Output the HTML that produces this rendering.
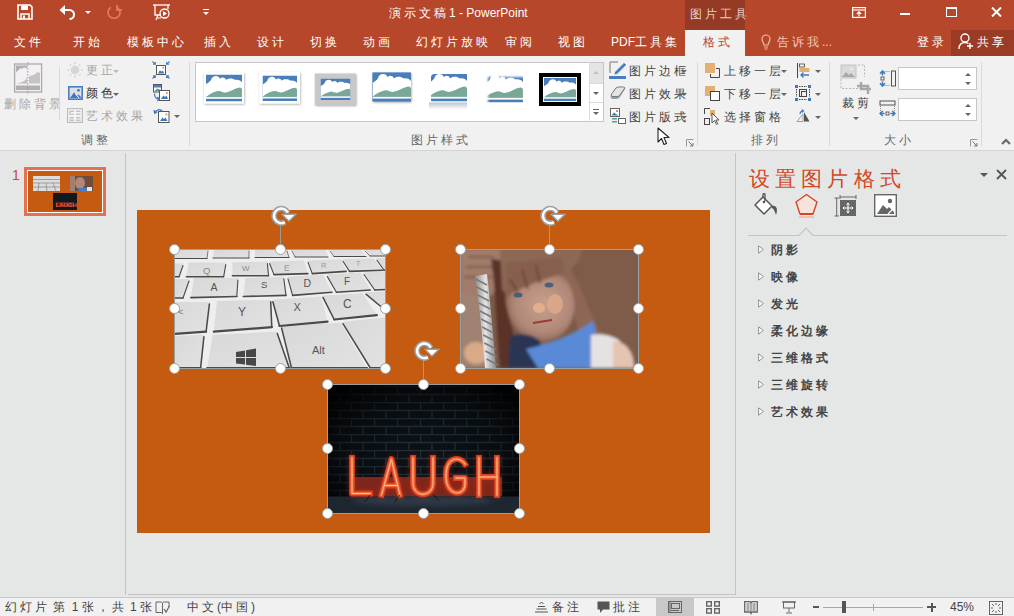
<!DOCTYPE html>
<html><head><meta charset="utf-8">
<style>
*{margin:0;padding:0;box-sizing:border-box}
html,body{width:1014px;height:616px;overflow:hidden;background:#E5E6E6;font-family:"Liberation Sans",sans-serif}
.a{position:absolute}
.t{position:absolute;white-space:nowrap;line-height:1}
#title{left:0;top:0;width:1014px;height:56px;background:#B7472A}
#ribbon{left:0;top:56px;width:1014px;height:95px;background:#F1F1F1;border-bottom:1px solid #D5D5D5}
.tab{color:#fff;font-size:12px;top:36px}
.rt{font-size:12px;color:#444}
.gl{font-size:12px;color:#666}
.dis{color:#A6A6A6}
.sep{position:absolute;width:1px;background:#DADADA}
.dd{position:absolute;width:0;height:0;border-left:3px solid transparent;border-right:3px solid transparent;border-top:3px solid #666}
.h{position:absolute;width:10px;height:10px;border-radius:50%;background:#fff;border:1.8px solid #9AA0A4}
#status{left:0;top:597px;width:1014px;height:19px;background:#F1F1F1;border-top:1px solid #C8C8C8}
.st{font-size:12px;color:#444;top:601px}
.li{font-size:12px;color:#444;font-weight:bold;left:771px}
.tri{position:absolute;left:758px;width:6px;height:9px}
.c{letter-spacing:0.25em}
</style></head><body>
<!-- title bar + tabs -->
<div id="title" class="a"></div>
<div class="a" style="left:685px;top:0;width:60px;height:30px;background:#953B25"></div>
<div class="t" style="left:690px;top:8px;font-size:12px;color:#E8CFC8"><span class="c">图片工具</span></div>
<div class="t" style="left:389px;top:7px;font-size:12px;color:#fff"><span class="c">演示文稿</span>1 - PowerPoint</div>
<div class="a" style="left:685px;top:30px;width:60px;height:26px;background:#F1F1F1"></div>
<div class="a" style="left:951px;top:30px;width:63px;height:26px;background:#9A3B25"></div>


<svg class="a" style="left:17px;top:4px" width="16" height="16" viewBox="0 0 16 16">
<path d="M1 1 H13 L15 3 V15 H1Z" fill="none" stroke="#fff" stroke-width="1.6"/>
<rect x="4" y="1.5" width="7" height="4.5" fill="#fff"/>
<path d="M4 15 V10 H12 V15" fill="none" stroke="#fff" stroke-width="1.5"/>
<rect x="6" y="11.5" width="2" height="3" fill="#fff"/>
</svg>
<svg class="a" style="left:59px;top:4px" width="18" height="16" viewBox="0 0 18 16">
<path d="M3 6 H10 C14 6 15 9 15 10.5 C15 13 13 15 10.5 15" fill="none" stroke="#fff" stroke-width="2"/>
<path d="M0.5 6 L6 1 V11Z" fill="#fff"/>
</svg>
<div class="dd" style="left:85px;top:11px;border-top-color:#fff"></div>
<svg class="a" style="left:107px;top:5px" width="15" height="14" viewBox="0 0 15 14">
<path d="M10 2.2 A6 6 0 1 1 4 2.2" fill="none" stroke="#E07858" stroke-width="1.8"/>
<path d="M10 0 V5 H15" fill="none" stroke="#E07858" stroke-width="1.8"/>
</svg>
<svg class="a" style="left:153px;top:4px" width="17" height="17" viewBox="0 0 17 17">
<path d="M0 1 H17" stroke="#fff" stroke-width="1.3"/>
<path d="M2 1 V11 H8" stroke="#fff" stroke-width="1.3" fill="none"/>
<path d="M15 1 V5" stroke="#fff" stroke-width="1.3"/>
<circle cx="11.5" cy="9.5" r="4.5" fill="none" stroke="#fff" stroke-width="1.3"/>
<path d="M10 7 L14 9.5 L10 12Z" fill="#fff"/>
<path d="M5 11 L3 16 M8 14 H4" stroke="#fff" stroke-width="1.2"/>
</svg>
<div class="a" style="left:203px;top:9px;width:6px;height:1px;background:#fff"></div>
<div class="dd" style="left:203px;top:12px;border-top-color:#fff"></div>
<svg class="a" style="left:852px;top:7px" width="14" height="11" viewBox="0 0 14 11">
<rect x="0.6" y="0.6" width="12.8" height="9.8" fill="none" stroke="#fff" stroke-width="1.2"/>
<path d="M0.6 3 H13.4" stroke="#fff" stroke-width="1.2"/>
<path d="M7 9.5 V5 M4.8 7 L7 4.8 L9.2 7" stroke="#fff" stroke-width="1.2" fill="none"/>
</svg>
<div class="a" style="left:900px;top:13px;width:10px;height:2px;background:#fff"></div>
<div class="a" style="left:946px;top:7px;width:11px;height:10px;border:1.3px solid #fff;border-top-width:2.5px"></div>
<svg class="a" style="left:991px;top:7px" width="11" height="10" viewBox="0 0 11 10"><path d="M1 0.5 L10 9.5 M10 0.5 L1 9.5" stroke="#fff" stroke-width="2"/></svg>
<svg class="a" style="left:761px;top:34px" width="10" height="16" viewBox="0 0 10 16">
<path d="M3 11 C3 9 1 7.5 1 5 A4 4 0 0 1 9 5 C9 7.5 7 9 7 11Z" fill="none" stroke="#F0B8A8" stroke-width="1.2"/>
<path d="M3 13 H7 M3.5 15 H6.5" stroke="#F0B8A8" stroke-width="1.2"/>
</svg>
<svg class="a" style="left:958px;top:33px" width="16" height="17" viewBox="0 0 16 17">
<circle cx="7" cy="5" r="4" fill="none" stroke="#fff" stroke-width="1.4"/>
<path d="M1 16 C1 11 4 9.5 7 9.5 C8.5 9.5 9.5 9.8 10.5 10.5" fill="none" stroke="#fff" stroke-width="1.4"/>
<path d="M12 10 V16 M9 13 H15" stroke="#fff" stroke-width="1.4"/>
</svg>
<div class="t tab" style="left:14px"><span class="c">文件</span></div>
<div class="t tab" style="left:73px"><span class="c">开始</span></div>
<div class="t tab" style="left:127px"><span class="c">模板中心</span></div>
<div class="t tab" style="left:204px"><span class="c">插入</span></div>
<div class="t tab" style="left:257px"><span class="c">设计</span></div>
<div class="t tab" style="left:310px"><span class="c">切换</span></div>
<div class="t tab" style="left:363px"><span class="c">动画</span></div>
<div class="t tab" style="left:416px"><span class="c">幻灯片放映</span></div>
<div class="t tab" style="left:505px"><span class="c">审阅</span></div>
<div class="t tab" style="left:558px"><span class="c">视图</span></div>
<div class="t tab" style="left:611px">PDF<span class="c">工具集</span></div>
<div class="t tab" style="left:703px;color:#B7472A"><span class="c">格式</span></div>
<div class="t tab" style="left:777px;color:#F0C8BC"><span class="c">告诉我</span>...</div>
<div class="t tab" style="left:917px"><span class="c">登录</span></div>
<div class="t tab" style="left:977px"><span class="c">共享</span></div>

<!-- ribbon -->
<div id="ribbon" class="a"></div>

<!-- ribbon group 1 -->
<svg class="a" style="left:13px;top:62px" width="31" height="32" viewBox="0 0 31 32">
<rect x="1.6" y="2" width="27" height="28" fill="#F4F0F4" stroke="#ABABAB" stroke-width="1.3"/>
<path d="M3 3.5 H14 V6.5 C12.5 5 10 5 9 7 C8 6 6 6.5 5.5 8.5 C4.5 8.5 3.5 9.5 3 11Z" fill="#B0B0B0"/>
<path d="M3 21.5 C6 21 10 20.5 12.5 18 L14 15.5 V21.5 Z" fill="#BDBDBD"/>
<path d="M16 21.5 V14.5 C18 13 20 14 22 12 C24 10 25.5 10 27 11 V21.5 Z" fill="#C4C4C4"/>
<rect x="3" y="23.5" width="24" height="4.5" fill="#B0B0B0"/>
<line x1="14.8" y1="0" x2="14.8" y2="32" stroke="#9A9A9A" stroke-width="1" stroke-dasharray="1.5 1.5"/>
</svg>
<div class="t dis" style="left:4px;top:98px;font-size:12px"><span class="c">删除背景</span></div>
<div class="sep" style="left:59px;top:67px;height:53px"></div>
<svg class="a" style="left:67px;top:62px" width="16" height="16" viewBox="0 0 16 16">
<g fill="#D6D6D6"><circle cx="8" cy="8" r="4.3"/><circle cx="8" cy="1.3" r="1.1"/><circle cx="8" cy="14.7" r="1.1"/><circle cx="1.3" cy="8" r="1.1"/><circle cx="14.7" cy="8" r="1.1"/><circle cx="3.3" cy="3.3" r="1"/><circle cx="12.7" cy="3.3" r="1"/><circle cx="3.3" cy="12.7" r="1"/><circle cx="12.7" cy="12.7" r="1"/></g>
</svg>
<div class="t dis" style="left:86px;top:64px;font-size:12px"><span class="c">更正</span></div>
<div class="dd" style="left:113px;top:70px;border-top-color:#B8B8B8"></div>
<svg class="a" style="left:68px;top:86px" width="15" height="14" viewBox="0 0 15 14">
<rect x="0.8" y="0.8" width="13.4" height="12.4" fill="#DDE0E6" stroke="#4A7EC0" stroke-width="1.6"/>
<path d="M2 12 L6 6.5 L9 9.5 L10.5 8.5 L13 11 V12Z" fill="#3F78C2"/>
<path d="M7.5 8 L11 12" stroke="#fff" stroke-width="1"/>
<circle cx="10.5" cy="4.3" r="1.4" fill="#3F78C2"/>
</svg>
<div class="t rt" style="left:86px;top:87px;font-size:12px;color:#333"><span class="c">颜色</span></div>
<div class="dd" style="left:113px;top:93px"></div>
<svg class="a" style="left:67px;top:108px" width="16" height="15" viewBox="0 0 16 15">
<rect x="0.6" y="0.6" width="14.8" height="13.8" fill="#F4F4F4" stroke="#BDBDBD" stroke-width="1.2"/>
<g fill="#C4C4C4"><path d="M2.5 2.5 H7 V4 H4 V7 H2.5Z"/><path d="M9 2.5 H13.5 V4 H9Z"/><path d="M9 5.5 H13.5 V7 H9Z"/><path d="M4 7 C5 5 7 5 7 7Z"/><rect x="2.5" y="9" width="4.5" height="1.5"/><rect x="9" y="9" width="4.5" height="1.5"/><rect x="2.5" y="11.5" width="4.5" height="1.5"/><rect x="9" y="11.5" width="4.5" height="1.5"/></g>
</svg>
<div class="t dis" style="left:86px;top:110px;font-size:12px"><span class="c">艺术效果</span></div>
<div class="dd" style="left:137px;top:116px;border-top-color:#B8B8B8"></div>
<svg class="a" style="left:152px;top:61px" width="18" height="18" viewBox="0 0 18 18">
<rect x="4.5" y="4.5" width="9" height="9" fill="#fff" stroke="#555" stroke-width="1"/>
<path d="M5.8 12.5 L8 9.3 L9.5 10.8 L10.8 9.5 L12.3 12.5Z" fill="#3C78C0"/><rect x="10.3" y="5.8" width="1.8" height="1.8" fill="#E0916A"/>
<g stroke="#3C78C0" stroke-width="1.1" fill="none"><path d="M0.5 0.5 L3.3 3.3 M1 3.3 H3.3 V1"/><path d="M17.5 0.5 L14.7 3.3 M17 3.3 H14.7 V1"/><path d="M0.5 17.5 L3.3 14.7 M1 14.7 H3.3 V17"/><path d="M17.5 17.5 L14.7 14.7 M17 14.7 H14.7 V17"/></g>
</svg>
<svg class="a" style="left:153px;top:84px" width="17" height="18" viewBox="0 0 17 18">
<rect x="0.5" y="0.5" width="8" height="7.5" fill="#fff" stroke="#555"/><path d="M1 7.5 L4 4.5 L8 6 V7.5Z" fill="#5E9E8E"/><rect x="1" y="1" width="7" height="2.5" fill="#4F7FBF"/>
<rect x="6.5" y="6.5" width="10" height="10" fill="#fff" stroke="#555" stroke-width="1"/>
<path d="M8 15 L10.5 11.5 L12 13 L13.5 11.5 L15 15Z" fill="#3C78C0"/><rect x="13" y="8" width="1.8" height="1.8" fill="#E0916A"/>
<path d="M1.5 9.5 C1.5 13.5 3 15 6 15 M4.3 12.8 L6.3 15 L4.3 17.2" stroke="#3C78C0" stroke-width="1.2" fill="none"/>
</svg>
<svg class="a" style="left:153px;top:107px" width="17" height="16" viewBox="0 0 17 16">
<rect x="5.5" y="4.5" width="10.5" height="11" fill="#fff" stroke="#555" stroke-width="1"/>
<path d="M7 14 L9.5 10.5 L11 12 L12.5 10.5 L14.5 14Z" fill="#3C78C0"/><rect x="12.5" y="6.5" width="1.8" height="1.8" fill="#E0916A"/>
<path d="M1.5 6 C3 2.5 7.5 1.5 9.5 4.5" stroke="#3C78C0" stroke-width="1.3" fill="none"/><path d="M0.3 2.8 L1.3 7.2 L4.8 5.2Z" fill="#3C78C0"/>
</svg>
<div class="dd" style="left:174px;top:115px"></div>
<div class="t gl" style="left:81px;top:134px"><span class="c">调整</span></div>
<div class="sep" style="left:189px;top:62px;height:84px"></div>

<!-- gallery -->
<div class="a" style="left:195px;top:62px;width:409px;height:60px;background:#fff;border:1px solid #C6C6C6"></div>
<div class="a" style="left:589px;top:62px;width:15px;height:60px;border-left:1px solid #DADADA"></div>
<div class="a" style="left:590px;top:63px;width:13px;height:20px;background:#E4E4E4"></div>
<div class="a" style="left:590px;top:83px;width:13px;height:1px;background:#DADADA"></div>
<div class="a" style="left:590px;top:102px;width:13px;height:1px;background:#DADADA"></div>
<div class="dd" style="left:593px;top:71px;border-top:none;border-bottom:3px solid #C0C0C0"></div>
<div class="dd" style="left:593px;top:92px"></div>
<div class="a" style="left:593px;top:109px;width:6px;height:1px;background:#666"></div>
<div class="dd" style="left:593px;top:112px"></div>

<svg width="0" height="0" style="position:absolute">
<defs>
<symbol id="pic" viewBox="0 0 36 27" preserveAspectRatio="none">
<rect width="36" height="27" fill="#4A7EBB"/>
<path d="M0 9.5 C2 8.5 4 7 5 5.5 C6 0.5 13 0 14 4.5 C15.5 2.5 19 2.5 20 5.5 C22 3.5 27 3.5 29 5.5 C32 5 35 6 36 8 V23 H0Z" fill="#fff"/>
<path d="M0 22.5 C4 19 8 17.5 12 16.5 C15 16 17 18.5 20 18 C25 17 30 13 34 13 C35 13 36 14 36 15 V22.7 H0Z" fill="#7AA898"/>
<rect x="0" y="22.7" width="36" height="1.6" fill="#fff"/>
</symbol>
<filter id="sh" x="-20%" y="-20%" width="140%" height="150%"><feDropShadow dx="0.5" dy="1" stdDeviation="0.8" flood-color="#000" flood-opacity="0.35"/></filter>
<filter id="soft" filterUnits="userSpaceOnUse" x="0" y="0" width="46" height="36"><feGaussianBlur stdDeviation="1.2"/></filter>
</defs></svg>
<svg class="a" style="left:202px;top:71px" width="46" height="36" viewBox="0 0 46 36">
<rect x="2" y="1.5" width="40" height="31" fill="#fff" filter="url(#sh)"/>
<use href="#pic" x="4" y="3.5" width="36" height="27"/>
</svg>
<svg class="a" style="left:258px;top:71px" width="46" height="36" viewBox="0 0 46 36">
<rect x="1.5" y="1" width="40.5" height="31.5" fill="#fff" filter="url(#sh)"/>
<use href="#pic" x="4.5" y="4.5" width="34.5" height="25.5"/>
</svg>
<svg class="a" style="left:313px;top:72px" width="48" height="38" viewBox="0 0 48 38">
<rect x="2" y="1.5" width="41" height="31.5" fill="#C8C8C8" filter="url(#sh)"/>
<use href="#pic" x="7.5" y="6.5" width="30" height="21.5"/>
</svg>
<svg class="a" style="left:371px;top:71px" width="46" height="36" viewBox="0 0 46 36">
<rect x="1.5" y="1.5" width="38.5" height="29" fill="#4A7EBB" filter="url(#sh)"/>
<use href="#pic" x="1.5" y="1.5" width="38.5" height="29"/>
</svg>
<svg class="a" style="left:427px;top:71px" width="46" height="42" viewBox="0 0 46 42">
<clipPath id="rc"><rect x="2" y="1.5" width="38" height="29" rx="3.5"/></clipPath>
<use href="#pic" x="2" y="1.5" width="38" height="29" clip-path="url(#rc)"/>
<linearGradient id="refl" x1="0" y1="0" x2="0" y2="1"><stop offset="0" stop-color="#A8B4C4"/><stop offset="1" stop-color="#fff"/></linearGradient><rect x="2" y="31.5" width="38" height="7" fill="url(#refl)" opacity="0.8"/>
</svg>
<svg class="a" style="left:482px;top:71px" width="46" height="36" viewBox="0 0 46 36">
<mask id="sm" maskUnits="userSpaceOnUse" x="0" y="0" width="46" height="36"><rect x="3.5" y="3.5" width="36.5" height="27" fill="#fff" filter="url(#soft)"/></mask><use href="#pic" x="2.5" y="2.5" width="38.5" height="29" mask="url(#sm)"/>
</svg>
<svg class="a" style="left:539px;top:73px" width="42" height="33" viewBox="0 0 42 33">
<rect x="0" y="0" width="42" height="33" fill="#000"/>
<rect x="4" y="4" width="34" height="25" fill="#fff"/>
<rect x="5" y="5" width="32" height="23" fill="#000"/>
<use href="#pic" x="5" y="5" width="32" height="23"/>
</svg>


<div class="t gl" style="left:411px;top:134px"><span class="c">图片样式</span></div>
<!-- picture border/effects/layout -->
<svg class="a" style="left:609px;top:61px" width="18" height="18" viewBox="0 0 18 18">
<path d="M1 1 H9 M1 1 V12" stroke="#777" stroke-width="1" fill="none"/>
<path d="M6 11 L14 3 L16 5 L8 13 L5.5 13.5Z" fill="#4A7EC0"/><path d="M14 3 L15 2 L17 4 L16 5Z" fill="#2D5E9E"/>
<rect x="0" y="15" width="17" height="3" fill="#4A7EC0"/>
</svg>
<div class="t rt" style="left:629px;top:65px"><span class="c">图片边框</span></div>
<div class="dd" style="left:681px;top:70px"></div>
<svg class="a" style="left:610px;top:86px" width="16" height="14" viewBox="0 0 16 14">
<path d="M1 9 L6 2 C7 1 9 1 11 1 H14 C15 1 16 2 15 3 L10 11 C9 12 8 13 6 13 H3 C1 13 0 11 1 9Z" fill="#9C9C9C"/>
<path d="M1.5 8 L6 2 C7 1 8.5 1 10 1 H13.5 C14.5 1 15 1.8 14.3 2.8 L9.5 9.5 C9 10.2 8 10.5 7 10.5 H3 C1.5 10.5 0.8 9.3 1.5 8Z" fill="#E4E4E4" stroke="#7A7A7A" stroke-width="1"/>
</svg>
<div class="t rt" style="left:629px;top:88px"><span class="c">图片效果</span></div>
<div class="dd" style="left:681px;top:93px"></div>
<svg class="a" style="left:610px;top:108px" width="16" height="16" viewBox="0 0 16 16">
<rect x="0.5" y="0.5" width="9" height="8" fill="#fff" stroke="#666"/>
<path d="M1.5 7.5 L4 4.5 L6 6 L8.5 7.5Z" fill="#3C78C0"/><rect x="6" y="2" width="2" height="2" fill="#E0916A"/>
<rect x="2" y="10" width="5" height="1.5" fill="#5E9E8E"/><rect x="2" y="13" width="5" height="1.5" fill="#5E9E8E"/>
<rect x="8.5" y="10.5" width="7" height="5" fill="#fff" stroke="#666"/>
</svg>
<div class="t rt" style="left:629px;top:111px"><span class="c">图片版式</span></div>
<div class="dd" style="left:681px;top:116px"></div>
<svg class="a" style="left:686px;top:139px" width="8" height="8" viewBox="0 0 8 8"><path d="M0.5 7.5 V0.5 H7.5" stroke="#999" fill="none"/><path d="M2.5 2.5 L7 7 M7 4 V7 H4" stroke="#777" fill="none"/></svg>
<div class="sep" style="left:697px;top:62px;height:84px"></div>

<!-- arrange -->
<svg class="a" style="left:705px;top:63px" width="16" height="15" viewBox="0 0 16 15">
<rect x="0" y="0" width="10" height="10" fill="#E3B072"/><path d="M11 5.5 H14.5 V14.5 H5.5 V11" stroke="#444" stroke-width="1" fill="none"/>
</svg>
<div class="t rt" style="left:724px;top:65px"><span class="c">上移一层</span></div>
<div class="dd" style="left:781px;top:70px"></div>
<svg class="a" style="left:705px;top:86px" width="16" height="15" viewBox="0 0 16 15">
<rect x="0" y="0" width="10" height="10" fill="#E3B072"/><rect x="5.5" y="5.5" width="9" height="9" fill="#fff" stroke="#444"/>
</svg>
<div class="t rt" style="left:724px;top:88px"><span class="c">下移一层</span></div>
<div class="dd" style="left:781px;top:93px"></div>
<svg class="a" style="left:704px;top:108px" width="17" height="17" viewBox="0 0 17 17">
<path d="M0.5 6 V0.5 H6" stroke="#444" fill="none"/><rect x="0.5" y="10.5" width="5" height="6" fill="none" stroke="#444"/>
<rect x="6" y="2" width="5" height="6" fill="#E3B072"/>
<path d="M8 5 L8 15 L10.5 12.5 L12.5 16.5 L13.8 15.8 L11.8 12 L15 12Z" fill="#fff" stroke="#444" stroke-width="0.9"/>
</svg>
<div class="t rt" style="left:724px;top:111px"><span class="c">选择窗格</span></div>
<svg class="a" style="left:797px;top:63px" width="13" height="15" viewBox="0 0 13 15">
<line x1="0.5" y1="0" x2="0.5" y2="15" stroke="#444"/><rect x="2.5" y="1" width="5" height="3" fill="none" stroke="#444" stroke-width="0.8"/>
<rect x="2.5" y="5" width="10" height="4" fill="#E3B072"/>
<path d="M12 12 H4 M6.5 9.5 L4 12 L6.5 14.5" stroke="#3C78C0" stroke-width="1.3" fill="none"/>
</svg>
<div class="dd" style="left:815px;top:70px"></div>
<svg class="a" style="left:795px;top:85px" width="16" height="16" viewBox="0 0 16 16">
<g fill="#3C78C0"><rect x="0" y="0" width="3" height="3"/><rect x="13" y="0" width="3" height="3"/><rect x="0" y="13" width="3" height="3"/><rect x="13" y="13" width="3" height="3"/></g>
<path d="M1.5 4 V12 M14.5 4 V12 M4 1.5 H12 M4 14.5 H12" stroke="#444" stroke-dasharray="1.5 1" fill="none"/>
<rect x="4.5" y="4.5" width="7" height="7" fill="none" stroke="#444"/><rect x="6.5" y="6.5" width="5" height="5" fill="none" stroke="#444"/>
</svg>
<div class="dd" style="left:815px;top:93px"></div>
<svg class="a" style="left:796px;top:109px" width="14" height="13" viewBox="0 0 14 13">
<path d="M1 12.5 L7 5 V12.5Z" fill="none" stroke="#A0A0A0"/><path d="M8 3 L13.5 12.5 H8Z" fill="#555"/>
<path d="M4 5 C4 3 5 2 7 2 M5.8 0.5 L7.5 2 L5.8 3.5" stroke="#3C78C0" stroke-width="1.1" fill="none"/>
</svg>
<div class="dd" style="left:815px;top:116px"></div>
<div class="t gl" style="left:751px;top:134px"><span class="c">排列</span></div>
<div class="sep" style="left:829px;top:62px;height:84px"></div>

<!-- size -->
<svg class="a" style="left:840px;top:64px" width="32" height="30" viewBox="0 0 32 30">
<rect x="1" y="1" width="15" height="13" fill="#DADADA" stroke="#C4C4C4"/>
<path d="M2 13 L6 8 L9 11 L11 9 L15 13Z" fill="#A8A8A8"/><circle cx="11.5" cy="5" r="1.3" fill="#ECECEC"/>
<path d="M1 15 V24.5 H22 M18 1 H24.5 V13" stroke="#B8B8B8" stroke-dasharray="2 1.5" fill="none"/>
<path d="M21 18 V25 H31 M17 22 H28 V30" stroke="#A8A8A8" stroke-width="2.4" fill="none"/>
</svg>
<div class="t rt" style="left:842px;top:97px"><span class="c">裁剪</span></div>
<div class="dd" style="left:853px;top:117px"></div>
<svg class="a" style="left:879px;top:70px" width="17" height="17" viewBox="0 0 17 17">
<rect x="12.5" y="1" width="4" height="15" fill="none" stroke="#555"/>
<path d="M3.5 1.5 H11 M3.5 15.5 H11" stroke="#888" stroke-dasharray="1 1" fill="none"/>
<rect x="2" y="7" width="3" height="3" fill="none" stroke="#555" stroke-width="0.9"/>
<path d="M3.5 5.5 V1.5 M1 3.8 L3.5 1 L6 3.8 M3.5 11.5 V15.5 M1 13.2 L3.5 16 L6 13.2" stroke="#3C78C0" stroke-width="1.5" fill="none"/>
</svg>
<div class="a" style="left:898px;top:67px;width:79px;height:23px;background:#fff;border:1px solid #C6C6C6"></div>
<div class="dd" style="left:965px;top:73px;border-top:none;border-bottom:3px solid #666"></div>
<div class="dd" style="left:965px;top:82px"></div>
<svg class="a" style="left:879px;top:100px" width="17" height="17" viewBox="0 0 17 17">
<rect x="1" y="1" width="15" height="4" fill="none" stroke="#555"/>
<path d="M1.5 6 V13.5 M15.5 6 V13.5" stroke="#888" stroke-dasharray="1 1" fill="none"/>
<rect x="7" y="12" width="3" height="3" fill="none" stroke="#555" stroke-width="0.9"/>
<path d="M5.5 13.5 H1.5 M3.8 11 L1 13.5 L3.8 16 M11.5 13.5 H15.5 M13.2 11 L16 13.5 L13.2 16" stroke="#3C78C0" stroke-width="1.5" fill="none"/>
</svg>
<div class="a" style="left:898px;top:98px;width:79px;height:23px;background:#fff;border:1px solid #C6C6C6"></div>
<div class="dd" style="left:965px;top:104px;border-top:none;border-bottom:3px solid #666"></div>
<div class="dd" style="left:965px;top:113px"></div>
<div class="t gl" style="left:884px;top:134px"><span class="c">大小</span></div>
<svg class="a" style="left:970px;top:139px" width="8" height="8" viewBox="0 0 8 8"><path d="M0.5 7.5 V0.5 H7.5" stroke="#999" fill="none"/><path d="M2.5 2.5 L7 7 M7 4 V7 H4" stroke="#777" fill="none"/></svg>
<svg class="a" style="left:688px;top:139px" width="0" height="0"></svg>
<div class="sep" style="left:981px;top:62px;height:84px"></div>
<svg class="a" style="left:1001px;top:138px" width="10" height="7" viewBox="0 0 10 7"><path d="M1 6 L5 2 L9 6" stroke="#6A6A6A" stroke-width="2.2" fill="none"/></svg>

<!-- main -->
<div class="a" style="left:125px;top:153px;width:1px;height:442px;background:#C4C4C4"></div>
<div class="a" style="left:735px;top:153px;width:1px;height:442px;background:#C4C4C4"></div>
<div class="a" style="left:128px;top:594px;width:608px;height:1px;background:#C4C4C4"></div>

<!-- slide -->
<div class="a" style="left:137px;top:210px;width:573px;height:323px;background:#C55A11"></div>

<svg class="a" style="left:175px;top:249px" width="211" height="119" viewBox="0 0 211 119">
<defs><linearGradient id="ktop" x1="0" y1="0" x2="1" y2="1"><stop offset="0" stop-color="#D8D8D8"/><stop offset="1" stop-color="#E2E2E2"/></linearGradient></defs>
<rect width="211" height="119" fill="#EEEEEE"/>
<g fill="url(#ktop)"><path d="M0 0 L33 0 L32 9.5 L0 9.5Z"/><path d="M39 0 L74 0 L74 9 L38 9Z"/><path d="M80 0 L112 0 L114 8.5 L80 8.5Z"/><path d="M117 0 L150 0 L153 8 L120 8Z"/><path d="M155 0 L186 0 L191 7.5 L159 7.5Z"/><path d="M190 0 L211 0 L211 7 L195 7Z"/><path d="M0 14.5 L8 14.5 L4 27.8 L0 27.8Z"/><path d="M13.6 13.6 L50.8 13.6 L48.6 27.8 L11.4 27.8Z"/><path d="M57.4 13.6 L92.4 12.5 L93.5 26.7 L57.4 26.7Z"/><path d="M94.6 12.5 L129 11.4 L132.9 24.6 L99 25.6Z"/><path d="M133 11.4 L166 10.3 L171.2 22.4 L137.3 24.6Z"/><path d="M168 10.3 L198.6 9.2 L207.3 21.3 L174.5 22.4Z"/><path d="M202 9.2 L211 9 L211 21 L209 21.3Z"/><path d="M0 30 L14 30 L8 49 L0 49Z"/><path d="M19 29 L62.9 29 L61.8 47.5 L15.8 48.6Z"/><path d="M70.5 29 L108.8 27.8 L111 46.4 L68.3 47.5Z"/><path d="M113 27.8 L148 25.6 L157 43.2 L117.6 46.4Z"/><path d="M152.4 25.6 L185.5 23.5 L195.3 41 L161.4 43.2Z"/><path d="M189 23.5 L211 22.5 L211 40.5 L199.7 41Z"/><path d="M0 53 L34.4 53 L31.1 82.6 L0 84.8Z"/><path d="M42 51.9 L95.7 50.8 L96.8 78.2 L38.8 82.6Z"/><path d="M97.9 50.8 L146 47.5 L152.6 72.7 L104.5 77Z"/><path d="M148 46.4 L187.6 44.3 L201.9 66.1 L159.2 70.5Z"/><path d="M191 43.2 L211 42.5 L211 60.7 L210 61Z"/><path d="M0 87 L28.9 85.8 L25.6 119 L0 119Z"/><path d="M37.7 85.8 L102.3 82.6 L114.3 119 L32.2 119Z"/><path d="M106.6 77 L165.8 73.8 L192 119 L116.5 119Z"/><path d="M168 72.7 L211 68.3 L211 119 L195.3 119Z"/></g>
<g stroke="#4A4A4A" fill="none" stroke-linecap="round"><path d="M0 9.5 L32 9.5" stroke-width="1.0"/><path d="M33 2 L32 9.5" stroke-width="0.70"/><path d="M38 9 L74 9" stroke-width="1.0"/><path d="M74 2 L74 9" stroke-width="0.70"/><path d="M80 8.5 L114 8.5" stroke-width="1.0"/><path d="M112 2 L114 8.5" stroke-width="0.70"/><path d="M120 8 L153 8" stroke-width="1.0"/><path d="M117 2 L120 8" stroke-width="0.70"/><path d="M159 7.5 L191 7.5" stroke-width="1.0"/><path d="M155 2 L159 7.5" stroke-width="0.70"/><path d="M195 7 L211 7" stroke-width="1.0"/><path d="M190 2 L195 7" stroke-width="0.70"/><path d="M0 27.8 L4 27.8" stroke-width="1.6"/><path d="M8 16.5 L4 27.8" stroke-width="1.12"/><path d="M11.4 27.8 L48.6 27.8" stroke-width="1.6"/><path d="M50.8 15.6 L48.6 27.8" stroke-width="1.12"/><path d="M57.4 26.7 L93.5 26.7" stroke-width="1.6"/><path d="M92.4 14.5 L93.5 26.7" stroke-width="1.12"/><path d="M99 25.6 L132.9 24.6" stroke-width="1.6"/><path d="M94.6 14.5 L99 25.6" stroke-width="1.12"/><path d="M137.3 24.6 L171.2 22.4" stroke-width="1.6"/><path d="M133 13.4 L137.3 24.6" stroke-width="1.12"/><path d="M174.5 22.4 L207.3 21.3" stroke-width="1.6"/><path d="M168 12.3 L174.5 22.4" stroke-width="1.12"/><path d="M209 21.3 L211 21" stroke-width="1.6"/><path d="M202 11.2 L209 21.3" stroke-width="1.12"/><path d="M0 49 L8 49" stroke-width="1.6"/><path d="M14 32 L8 49" stroke-width="1.12"/><path d="M15.8 48.6 L61.8 47.5" stroke-width="1.6"/><path d="M62.9 31 L61.8 47.5" stroke-width="1.12"/><path d="M68.3 47.5 L111 46.4" stroke-width="1.6"/><path d="M108.8 29.8 L111 46.4" stroke-width="1.12"/><path d="M117.6 46.4 L157 43.2" stroke-width="1.6"/><path d="M113 29.8 L117.6 46.4" stroke-width="1.12"/><path d="M161.4 43.2 L195.3 41" stroke-width="1.6"/><path d="M152.4 27.6 L161.4 43.2" stroke-width="1.12"/><path d="M199.7 41 L211 40.5" stroke-width="1.6"/><path d="M189 25.5 L199.7 41" stroke-width="1.12"/><path d="M0 84.8 L31.1 82.6" stroke-width="2.2"/><path d="M34.4 55 L31.1 82.6" stroke-width="1.54"/><path d="M38.8 82.6 L96.8 78.2" stroke-width="2.2"/><path d="M95.7 52.8 L96.8 78.2" stroke-width="1.54"/><path d="M104.5 77 L152.6 72.7" stroke-width="2.2"/><path d="M97.9 52.8 L104.5 77" stroke-width="1.54"/><path d="M159.2 70.5 L201.9 66.1" stroke-width="2.2"/><path d="M148 48.4 L159.2 70.5" stroke-width="1.54"/><path d="M210 61 L211 60.7" stroke-width="2.2"/><path d="M191 45.2 L210 61" stroke-width="1.54"/><path d="M0 119 L25.6 119" stroke-width="2.2"/><path d="M28.9 87.8 L25.6 119" stroke-width="1.54"/><path d="M32.2 119 L114.3 119" stroke-width="2.2"/><path d="M102.3 84.6 L114.3 119" stroke-width="1.54"/><path d="M116.5 119 L192 119" stroke-width="2.2"/><path d="M106.6 79 L116.5 119" stroke-width="1.54"/><path d="M195.3 119 L211 119" stroke-width="2.2"/><path d="M168 74.7 L195.3 119" stroke-width="1.54"/></g>
<g fill="#555" font-family="Liberation Sans">
<text x="28" y="24.6" fill="#8A8A8A" font-size="9.5">Q</text><text x="67" y="21.5" fill="#8A8A8A" font-size="8">W</text><text x="109" y="22.4" fill="#999" font-size="8.5">E</text><text x="146" y="19" fill="#999" font-size="7.5">R</text><text x="181" y="17" fill="#999" font-size="7">T</text>
<text x="35.5" y="42" font-size="10.5">A</text><text x="86" y="38.8" font-size="9.5">S</text><text x="128.5" y="37.7" font-size="10.5">D</text><text x="169" y="35.5" font-size="10">F</text>
<text x="63" y="66.5" font-size="12">Y</text><text x="118.5" y="62" font-size="11">X</text><text x="168" y="58.5" font-size="12">C</text>
<text x="137" y="104.5" font-size="11">Alt</text>
<text x="3" y="66" font-size="9" fill="#777">&lt;</text>
</g>
<g fill="#484848"><path d="M61 103 L70 101.5 V108 H61Z"/><path d="M71 101.3 L81 99.5 V108 H71Z"/><path d="M61 109 H70 V115.5 L61 114.5Z"/><path d="M71 109 H81 V117 L71 115.7Z"/></g>
</svg>

<svg class="a" style="left:460px;top:249px" width="178" height="119" viewBox="0 0 178 119">
<defs>
<radialGradient id="face" cx="0.55" cy="0.45" r="0.6"><stop offset="0" stop-color="#C8A08C"/><stop offset="0.7" stop-color="#B08878"/><stop offset="1" stop-color="#8A6454"/></radialGradient>
<linearGradient id="rope" x1="0" y1="0" x2="1" y2="0"><stop offset="0" stop-color="#8A8A8A"/><stop offset="0.5" stop-color="#E4E4E4"/><stop offset="1" stop-color="#8A8A8A"/></linearGradient>
<filter id="bl2" x="-5%" y="-5%" width="110%" height="110%"><feGaussianBlur stdDeviation="1.5"/></filter>
<filter id="bl1" x="-5%" y="-5%" width="110%" height="110%"><feGaussianBlur stdDeviation="0.7"/></filter>
</defs>
<rect width="178" height="119" fill="#7C5A48"/>
<g filter="url(#bl2)">
<rect x="118" y="0" width="60" height="119" fill="#7E5C4A"/>
<path d="M0 40 H26 C28 60 26 90 28 119 H0Z" fill="#A08272"/>
<ellipse cx="16" cy="104" rx="12" ry="11" fill="#D8AA88"/>
<path d="M0 0 H40 C42 15 40 35 32 46 C22 48 8 47 0 44Z" fill="#A27C6A"/>
<path d="M8 8 H34 M6 18 H34 M4 28 H32" stroke="#7A5848" stroke-width="2"/>
<path d="M31 10 C36 40 36 80 40 119 H66 C58 100 50 75 46 55 C44 40 46 25 48 12Z" fill="#5A3226"/>
<path d="M100 6 C118 25 126 55 140 84 L120 90 C114 62 108 38 96 18Z" fill="#8E6654"/>
<path d="M40 0 H122 C122 10 112 22 100 28 C86 34 66 40 48 48 L42 40Z" fill="#8C6856"/>
<path d="M46 50 C50 36 72 30 92 26 C104 24 112 34 114 52 C116 72 106 90 84 92 C62 92 48 76 46 50Z" fill="url(#face)"/>
<path d="M46 48 C58 40 78 32 104 24 L102 8 L46 14Z" fill="#86604E"/>
<path d="M50 30 L58 44 M62 20 L68 40 M76 16 L80 34" stroke="#6A4434" stroke-width="2"/>
<path d="M64 88 C80 96 100 96 116 86 L118 104 H62Z" fill="#8A6A5A"/>
<path d="M50 88 C58 84 70 84 80 92 L86 119 H48Z" fill="#2C3652"/>
<path d="M66 100 C90 95 115 85 133 72 C138 85 136 105 132 119 H78Z" fill="#5A8AD6"/>
<path d="M131 86 C140 84 152 86 160 92 L160 119 H131Z" fill="#E6E2E2"/>
<path d="M153 92 C165 92 174 102 174 119 H153Z" fill="#E4C4B2"/>
</g>
<g filter="url(#bl1)">
<ellipse cx="79" cy="59" rx="6" ry="5" fill="#E4AE8E"/>
<ellipse cx="95" cy="55" rx="8" ry="10" fill="#E0AA8C" opacity="0.8"/>
<ellipse cx="58" cy="46" rx="4.5" ry="2.5" fill="#4A5E7A"/><ellipse cx="89" cy="36" rx="4.5" ry="2.5" fill="#4A5E7A"/>
<path d="M73 74 C79 73 86 72 92 71" stroke="#9A3A36" stroke-width="1.8" fill="none"/>
</g>
<path d="M15 27 C19 50 22 85 25 119 H36 C33 85 30 50 27 25Z" fill="url(#rope)"/>
<g stroke="#7A7A7A" stroke-width="1.6"><path d="M15.5 30 L27.0 36"/><path d="M16.6 38 L28.1 44"/><path d="M17.7 46 L29.2 52"/><path d="M18.8 54 L30.3 60"/><path d="M19.9 62 L31.4 68"/><path d="M21.0 70 L32.5 76"/><path d="M22.1 78 L33.6 84"/><path d="M23.2 86 L34.7 92"/><path d="M24.3 94 L35.8 100"/><path d="M25.4 102 L36.9 108"/><path d="M26.5 110 L38.0 116"/></g>
</svg>

<svg class="a" style="left:328px;top:384px" width="191" height="129" viewBox="0 0 191 129">
<defs>
<radialGradient id="vig" cx="0.5" cy="0.55" r="0.65"><stop offset="0" stop-color="#000" stop-opacity="0"/><stop offset="0.6" stop-color="#000" stop-opacity="0.3"/><stop offset="1" stop-color="#000" stop-opacity="0.9"/></radialGradient>
<pattern id="brick" x="0" y="2" width="23" height="16" patternUnits="userSpaceOnUse"><rect width="23" height="16" fill="#0E1216"/><path d="M0 0.5 H23 M0 8.5 H23 M0.5 0 V8 M12 8 V16" stroke="#22323E" stroke-width="1.3"/></pattern>
<filter id="glow" x="-20%" y="-40%" width="140%" height="180%"><feGaussianBlur stdDeviation="2.5"/></filter>
</defs>
<rect width="191" height="129" fill="url(#brick)"/>
<rect width="191" height="129" fill="url(#vig)"/>
<rect x="22" y="93" width="152" height="19.5" fill="#7E261A"/>
<rect x="0" y="112.5" width="191" height="16.5" fill="#1E2630"/>
<ellipse cx="95" cy="117" rx="70" ry="5" fill="#3A4654" opacity="0.6" filter="url(#glow)"/>
<g fill="none" stroke-linecap="square" stroke-linejoin="round">
<g stroke="#D03420" stroke-width="7" opacity="0.35" filter="url(#glow)"><path d="M24 74 V109.5 H42"/><path d="M53.5 111 L63.4 75 L72 111 M56.5 101.5 H69.5"/><path d="M85 74 V99 C85 114 105 114 105 99 V74"/><path d="M137 80 C132 72 118 72 118 92 C118 113 137 113 137 100 V94 H128"/><path d="M151 74 V111 M169 74 V111 M151 93 H169"/></g>
<g stroke="#D83C24" stroke-width="5.8"><path d="M24 74 V109.5 H42"/><path d="M53.5 111 L63.4 75 L72 111 M56.5 101.5 H69.5"/><path d="M85 74 V99 C85 114 105 114 105 99 V74"/><path d="M137 80 C132 72 118 72 118 92 C118 113 137 113 137 100 V94 H128"/><path d="M151 74 V111 M169 74 V111 M151 93 H169"/></g>
<g stroke="#F06A38" stroke-width="3.2"><path d="M24 74 V109.5 H42"/><path d="M53.5 111 L63.4 75 L72 111 M56.5 101.5 H69.5"/><path d="M85 74 V99 C85 114 105 114 105 99 V74"/><path d="M137 80 C132 72 118 72 118 92 C118 113 137 113 137 100 V94 H128"/><path d="M151 74 V111 M169 74 V111 M151 93 H169"/></g>
<g stroke="#FFC08A" stroke-width="1"><path d="M24 74 V109.5 H42"/><path d="M53.5 111 L63.4 75 L72 111 M56.5 101.5 H69.5"/><path d="M85 74 V99 C85 114 105 114 105 99 V74"/><path d="M137 80 C132 72 118 72 118 92 C118 113 137 113 137 100 V94 H128"/><path d="M151 74 V111 M169 74 V111 M151 93 H169"/></g>
</g>
<path d="M42 111 L37 118 M72 111 L66 119 M105 110 L111 117" stroke="#111" stroke-width="0.8"/>
</svg>
<div class="a" style="left:174px;top:248.5px;width:212px;height:120px;border:1px solid #9AA0A4"></div>
<div class="a" style="left:279.5px;top:223px;width:1px;height:26px;background:#9A9A9A"></div>
<svg class="a" style="left:269.0px;top:205.0px" width="30" height="24" viewBox="0 0 30 24">
<path d="M18.9 7.7 A7.3 7.3 0 1 0 15.95 17.1" stroke="#9AA0A4" stroke-width="5.6" fill="none"/>
<path d="M18.9 7.7 A7.3 7.3 0 1 0 15.95 17.1" stroke="#fff" stroke-width="2.4" fill="none"/>
<path d="M13 9.3 L27.3 9.1 L19.9 16.2Z" fill="#fff" stroke="#9AA0A4" stroke-width="1.4" stroke-linejoin="round"/>
</svg>
<div class="h" style="left:169.0px;top:243.5px;width:11px;height:11px"></div>
<div class="h" style="left:274.5px;top:243.5px;width:11px;height:11px"></div>
<div class="h" style="left:380.0px;top:362.5px;width:11px;height:11px"></div>
<div class="h" style="left:169.0px;top:303.0px;width:11px;height:11px"></div>
<div class="h" style="left:380.0px;top:303.0px;width:11px;height:11px"></div>
<div class="h" style="left:169.0px;top:362.5px;width:11px;height:11px"></div>
<div class="h" style="left:274.5px;top:362.5px;width:11px;height:11px"></div>
<div class="h" style="left:380.0px;top:243.5px;width:11px;height:11px"></div>
<div class="a" style="left:460px;top:248.5px;width:179px;height:120px;border:1px solid #9AA0A4"></div>
<div class="a" style="left:548.5px;top:223px;width:1px;height:26px;background:#9A9A9A"></div>
<svg class="a" style="left:538.0px;top:205.0px" width="30" height="24" viewBox="0 0 30 24">
<path d="M18.9 7.7 A7.3 7.3 0 1 0 15.95 17.1" stroke="#9AA0A4" stroke-width="5.6" fill="none"/>
<path d="M18.9 7.7 A7.3 7.3 0 1 0 15.95 17.1" stroke="#fff" stroke-width="2.4" fill="none"/>
<path d="M13 9.3 L27.3 9.1 L19.9 16.2Z" fill="#fff" stroke="#9AA0A4" stroke-width="1.4" stroke-linejoin="round"/>
</svg>
<div class="h" style="left:454.5px;top:243.5px;width:11px;height:11px"></div>
<div class="h" style="left:543.5px;top:243.5px;width:11px;height:11px"></div>
<div class="h" style="left:632.5px;top:362.5px;width:11px;height:11px"></div>
<div class="h" style="left:454.5px;top:303.0px;width:11px;height:11px"></div>
<div class="h" style="left:632.5px;top:303.0px;width:11px;height:11px"></div>
<div class="h" style="left:454.5px;top:362.5px;width:11px;height:11px"></div>
<div class="h" style="left:543.5px;top:362.5px;width:11px;height:11px"></div>
<div class="h" style="left:632.5px;top:243.5px;width:11px;height:11px"></div>
<div class="a" style="left:327px;top:383.5px;width:193px;height:130.5px;border:1px solid #9AA0A4"></div>
<div class="a" style="left:422.75px;top:358px;width:1px;height:26px;background:#9A9A9A"></div>
<svg class="a" style="left:412.25px;top:340.0px" width="30" height="24" viewBox="0 0 30 24">
<path d="M18.9 7.7 A7.3 7.3 0 1 0 15.95 17.1" stroke="#9AA0A4" stroke-width="5.6" fill="none"/>
<path d="M18.9 7.7 A7.3 7.3 0 1 0 15.95 17.1" stroke="#fff" stroke-width="2.4" fill="none"/>
<path d="M13 9.3 L27.3 9.1 L19.9 16.2Z" fill="#fff" stroke="#9AA0A4" stroke-width="1.4" stroke-linejoin="round"/>
</svg>
<div class="h" style="left:322.0px;top:378.5px;width:11px;height:11px"></div>
<div class="h" style="left:417.75px;top:378.5px;width:11px;height:11px"></div>
<div class="h" style="left:513.5px;top:508.0px;width:11px;height:11px"></div>
<div class="h" style="left:322.0px;top:443.25px;width:11px;height:11px"></div>
<div class="h" style="left:513.5px;top:443.25px;width:11px;height:11px"></div>
<div class="h" style="left:322.0px;top:508.0px;width:11px;height:11px"></div>
<div class="h" style="left:417.75px;top:508.0px;width:11px;height:11px"></div>
<div class="h" style="left:513.5px;top:378.5px;width:11px;height:11px"></div>


<!-- left thumb -->
<div class="t" style="left:12px;top:167.5px;font-size:14px;color:#D24726">1</div>
<div class="a" style="left:24px;top:167px;width:82px;height:49px;background:#E5714E"></div>
<div class="a" style="left:27px;top:170px;width:76px;height:43px;background:#fff"></div>
<div class="a" style="left:28px;top:171px;width:74px;height:41px;background:#C55A11"></div>
<svg class="a" style="left:33px;top:176px" width="27" height="15" viewBox="0 0 27 15"><rect width="27" height="15" fill="#DCDCDC"/><g stroke="#777" stroke-width="0.6"><path d="M0 3.5 H27 M0 7 H27 M0 11 H27 M6 7 L5 15 M13 7 L14 15 M20 7 L23 15"/></g></svg>
<svg class="a" style="left:70px;top:176px" width="23" height="15" viewBox="0 0 23 15"><rect width="23" height="15" fill="#6E4C3E"/><rect x="0" y="0" width="5" height="15" fill="#A08070"/><ellipse cx="10" cy="7" rx="5" ry="6" fill="#B08878"/><path d="M9 12 H17 V15 H8Z" fill="#4A7AC8"/><path d="M17 11 H22 V15 H17Z" fill="#E8E4E2"/></svg>
<svg class="a" style="left:53px;top:193px" width="24" height="17" viewBox="0 0 24 17"><rect width="24" height="17" fill="#121820"/><path d="M3 9 H21 V14 H3Z" fill="#7A2A22" opacity="0.8"/><text x="2.5" y="14" font-size="6" font-family="Liberation Sans" fill="#F05A40" font-weight="bold">LAUGH</text></svg>

<!-- task pane -->
<div class="t" style="left:749px;top:168.5px;font-size:20.5px;color:#D24726"><span class="c">设置图片格式</span></div>
<div class="dd" style="left:980px;top:173px;border-left-width:4px;border-right-width:4px;border-top-width:4px;border-top-color:#555"></div>
<svg class="a" style="left:996px;top:169px" width="11" height="11" viewBox="0 0 11 11"><path d="M1 1 L10 10 M10 1 L1 10" stroke="#555" stroke-width="1.8"/></svg>
<svg class="a" style="left:753px;top:193px" width="26" height="25" viewBox="0 0 26 25">
<path d="M2 12 L10 4 L19 13 L11 21Z" fill="#fff" stroke="#555" stroke-width="1.5" stroke-linejoin="round"/>
<path d="M10 4 V1.5 C10 0.5 12 0.5 12 1.5 V8" stroke="#555" stroke-width="1.3" fill="none"/>
<circle cx="11" cy="9" r="1.3" fill="#555"/>
<path d="M19 13 C24 12 25 17 23 22 C22 19 21 16 19 15Z" fill="#555"/>
</svg>
<svg class="a" style="left:794px;top:193px" width="25" height="26" viewBox="0 0 25 26">
<path d="M12.5 1.5 L23 9 L19 21 H6 L2 9Z" fill="#F6E4DC" stroke="#D24726" stroke-width="1.4" stroke-linejoin="round"/>
<path d="M6 21 H19" stroke="#D24726" stroke-width="2"/>
<rect x="5" y="23" width="15" height="2" fill="#EFC2B2"/>
</svg>
<svg class="a" style="left:834px;top:194px" width="23" height="23" viewBox="0 0 23 23">
<path d="M0.5 4 H5 M2.7 4 V22 M0.5 22 H5" stroke="#666" stroke-width="1"/>
<path d="M6 1 V5 M22 1 V5 M6 3 H22" stroke="#666" stroke-width="1"/>
<rect x="6" y="6" width="16" height="16" fill="#666"/>
<path d="M14 9 V19 M9 14 H19" stroke="#fff" stroke-width="1.2"/>
<path d="M12.5 10.5 L14 9 L15.5 10.5 M12.5 17.5 L14 19 L15.5 17.5 M10.5 12.5 L9 14 L10.5 15.5 M17.5 12.5 L19 14 L17.5 15.5" stroke="#fff" stroke-width="1" fill="none"/>
</svg>
<svg class="a" style="left:874px;top:194px" width="23" height="23" viewBox="0 0 23 23">
<rect x="0.7" y="0.7" width="21.6" height="21.6" fill="#fff" stroke="#666" stroke-width="1.4"/>
<rect x="3" y="3" width="17" height="17" fill="#fff"/>
<path d="M3 20 L9 11 L13 15 L15 13 L20 18 V20Z" fill="#666"/>
<circle cx="16" cy="7" r="2.2" fill="#666"/>
<path d="M14 20 L20 14" stroke="#fff" stroke-width="1.2"/>
</svg>
<svg class="a" style="left:748px;top:227px" width="259" height="10" viewBox="0 0 259 10"><path d="M0 8.5 H51 L58 1 L65 8.5 H259" fill="none" stroke="#C4C4C4" stroke-width="1.1"/></svg>
<svg class="tri" style="top:245px" viewBox="0 0 6 9"><path d="M0.6 0.8 L5.4 4.5 L0.6 8.2Z" fill="#fff" stroke="#888" stroke-width="0.9"/></svg>
<div class="t li" style="top:244px"><span class="c">阴影</span></div>
<svg class="tri" style="top:272px" viewBox="0 0 6 9"><path d="M0.6 0.8 L5.4 4.5 L0.6 8.2Z" fill="#fff" stroke="#888" stroke-width="0.9"/></svg>
<div class="t li" style="top:271px"><span class="c">映像</span></div>
<svg class="tri" style="top:299px" viewBox="0 0 6 9"><path d="M0.6 0.8 L5.4 4.5 L0.6 8.2Z" fill="#fff" stroke="#888" stroke-width="0.9"/></svg>
<div class="t li" style="top:298px"><span class="c">发光</span></div>
<svg class="tri" style="top:326px" viewBox="0 0 6 9"><path d="M0.6 0.8 L5.4 4.5 L0.6 8.2Z" fill="#fff" stroke="#888" stroke-width="0.9"/></svg>
<div class="t li" style="top:325px"><span class="c">柔化边缘</span></div>
<svg class="tri" style="top:353px" viewBox="0 0 6 9"><path d="M0.6 0.8 L5.4 4.5 L0.6 8.2Z" fill="#fff" stroke="#888" stroke-width="0.9"/></svg>
<div class="t li" style="top:352px"><span class="c">三维格式</span></div>
<svg class="tri" style="top:380px" viewBox="0 0 6 9"><path d="M0.6 0.8 L5.4 4.5 L0.6 8.2Z" fill="#fff" stroke="#888" stroke-width="0.9"/></svg>
<div class="t li" style="top:379px"><span class="c">三维旋转</span></div>
<svg class="tri" style="top:407px" viewBox="0 0 6 9"><path d="M0.6 0.8 L5.4 4.5 L0.6 8.2Z" fill="#fff" stroke="#888" stroke-width="0.9"/></svg>
<div class="t li" style="top:406px"><span class="c">艺术效果</span></div>
<!-- status -->
<div id="status" class="a"></div>
<div class="t st" style="left:5px"><span class="c">幻灯片</span> <span class="c">第</span> 1 <span class="c">张，共</span> 1 <span class="c">张</span></div>
<div class="t st" style="left:187px"><span class="c">中文</span>(<span class="c">中国</span>)</div>
<div class="t st" style="left:552px"><span class="c">备注</span></div>
<div class="t st" style="left:613px"><span class="c">批注</span></div>
<div class="t st" style="left:950px">45%</div>

<svg class="a" style="left:155px;top:601px" width="15" height="14" viewBox="0 0 15 14">
<path d="M1 1 H6 C7 1 7.5 2 7.5 3 V13 C7.5 12 7 11.5 6 11.5 H1Z" fill="none" stroke="#666"/>
<path d="M7.5 3 C7.5 2 8 1 9 1 H14 V6" fill="none" stroke="#666"/>
<path d="M9 8 L11 11 L14.5 5" fill="none" stroke="#666" stroke-width="1.2"/>
</svg>
<svg class="a" style="left:535px;top:601px" width="13" height="12" viewBox="0 0 13 12">
<path d="M4.5 3 L6.5 1 L8.5 3" fill="none" stroke="#555"/>
<path d="M3 5.5 H10 M1.5 8 H11.5 M0 11 H13" stroke="#555" stroke-width="1.1"/>
</svg>
<svg class="a" style="left:597px;top:601px" width="13" height="13" viewBox="0 0 13 13">
<path d="M0.5 0.5 H12.5 V8.5 H6 L3 12 V8.5 H0.5Z" fill="#555"/>
</svg>
<div class="a" style="left:656px;top:598px;width:38px;height:18px;background:#C8C8C8"></div>
<svg class="a" style="left:668px;top:601px" width="14" height="12" viewBox="0 0 14 12">
<rect x="0.5" y="0.5" width="13" height="11" fill="none" stroke="#666"/><rect x="3.5" y="2.5" width="8" height="5" fill="none" stroke="#666"/><path d="M3 9.5 H11" stroke="#666"/><path d="M2 0.5 V11.5" stroke="#666"/>
</svg>
<svg class="a" style="left:706px;top:601px" width="14" height="13" viewBox="0 0 14 13">
<g fill="none" stroke="#666" stroke-width="1.4"><rect x="0.7" y="0.7" width="4.6" height="4.4"/><rect x="8.7" y="0.7" width="4.6" height="4.4"/><rect x="0.7" y="7.7" width="4.6" height="4.4"/><rect x="8.7" y="7.7" width="4.6" height="4.4"/></g>
</svg>
<svg class="a" style="left:744px;top:601px" width="14" height="14" viewBox="0 0 14 14">
<path d="M0.7 0.7 H6 L7 1.7 L8 0.7 H13.3 V11 H8 L7 12 L6 11 H0.7Z" fill="none" stroke="#666" stroke-width="1.3"/>
<path d="M7 1.7 V13.5 M2.5 3 H5.5 M2.5 5 H5.5 M2.5 7 H5.5 M2.5 9 H5.5 M8.5 3 H11.5 M8.5 5 H11.5 M8.5 7 H11.5 M8.5 9 H11.5" stroke="#666" stroke-width="1"/>
</svg>
<svg class="a" style="left:782px;top:601px" width="14" height="13" viewBox="0 0 14 13">
<path d="M0 1 H14" stroke="#666" stroke-width="1.2"/><rect x="1.5" y="1" width="11" height="6" fill="none" stroke="#666"/><path d="M7 7 V11 M4 12 H10" stroke="#666"/>
</svg>
<div class="a" style="left:813px;top:606px;width:6px;height:2px;background:#555"></div>
<div class="a" style="left:823px;top:607px;width:100px;height:1px;background:#A8A8A8"></div>
<div class="a" style="left:873px;top:604px;width:1px;height:7px;background:#A8A8A8"></div>
<div class="a" style="left:842px;top:601px;width:4px;height:12px;background:#555"></div>
<div class="a" style="left:927px;top:606px;width:9px;height:2px;background:#555"></div>
<div class="a" style="left:930.5px;top:602.5px;width:2px;height:9px;background:#555"></div>
<svg class="a" style="left:989px;top:601px" width="14" height="14" viewBox="0 0 14 14">
<rect x="0.5" y="0.5" width="13" height="13" fill="none" stroke="#666"/>
<path d="M3 3 L5 5 M11 3 L9 5 M3 11 L5 9 M11 11 L9 9" stroke="#666"/>
<path d="M7 2 V4 M7 10 V12 M2 7 H4 M10 7 H12" stroke="#666"/>
</svg>
<svg class="a" style="left:657px;top:127px" width="13" height="19" viewBox="0 0 13 19">
<path d="M1 1 L1 15 L4.5 11.5 L7 17.5 L9.5 16.5 L7 10.5 L12 10.5Z" fill="#fff" stroke="#222" stroke-width="1.1" stroke-linejoin="round"/>
</svg>

</body></html>
